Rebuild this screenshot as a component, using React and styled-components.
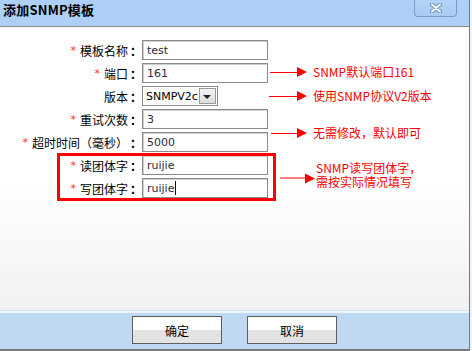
import React from "react";
import styled, { createGlobalStyle } from "styled-components";

const Global = createGlobalStyle`
  html, body { margin: 0; padding: 0; background: #eef3f8; }
  body { font-family: "Noto Sans CJK SC", "Noto Sans", sans-serif; }
`;

const Dialog = styled.div`
  width: 469px;
  height: 349px;
  border-right: 1px solid #7a7a7a;
  border-bottom: 2px solid #7a7a7a;
  display: flex;
  flex-direction: column;
  background: #fff;
`;

const TitleBar = styled.div`
  height: 26px;
  flex: none;
  background: #aecff6;
  border-bottom: 1px solid #8a8a8a;
  display: flex;
  justify-content: space-between;
  align-items: flex-start;
`;

const Title = styled.div`
  font-size: 13px;
  font-weight: 700;
  color: #000;
  line-height: 20px;
  padding-left: 3px;
  letter-spacing: 0.2px;
`;

const CloseButton = styled.div`
  width: 41px;
  height: 16px;
  margin-right: 12px;
  border: 1px solid #7b9ac3;
  border-top: none;
  border-radius: 0 0 4px 4px;
  background: linear-gradient(#b3d3f8, #a9cbf2);
  display: flex;
  align-items: center;
  justify-content: center;
`;

const Content = styled.div`
  position: relative;
  flex: 1;
  background: linear-gradient(#ffffff 55%, #f1f1f1 100%);
  padding-top: 13px;
`;

const Form = styled.div`
  display: grid;
  grid-template-columns: 142px 126px;
  grid-auto-rows: 20px;
  row-gap: 3px;
`;

const Label = styled.div`
  font-size: 12px;
  color: #000;
  display: flex;
  align-items: center;
  justify-content: flex-end;
  padding-right: 1px;
  white-space: nowrap;
`;

const Star = styled.span`
  color: #ff2a2a;
  margin-right: 4px;
  font-family: "DejaVu Sans", sans-serif;
  font-size: 11px;
`;

const Colon = styled.span`
  display: inline-block;
  width: 11px;
  padding-left: 2px;
  font-weight: 700;
`;

const Input = styled.div`
  box-sizing: border-box;
  height: 20px;
  width: ${(p) => p.$w || 126}px;
  border: 1px solid #8a8a8a;
  box-shadow: inset 1px 1px 0 #d0d0d0;
  background: #fff;
  font-family: "DejaVu Sans", sans-serif;
  font-size: 11px;
  color: #2a2a3a;
  display: flex;
  align-items: center;
  padding-left: 4px;
`;

const Caret = styled.span`
  display: inline-block;
  width: 1px;
  height: 14px;
  background: #000;
  margin-left: 1px;
`;

const Select = styled.div`
  box-sizing: border-box;
  height: 20px;
  width: 76px;
  border: 1px solid #8a8a8a;
  background: #fff;
  display: flex;
  align-items: stretch;
  font-family: "DejaVu Sans", sans-serif;
  font-size: 11px;
  color: #000;
`;

const SelectText = styled.div`
  flex: 1;
  display: flex;
  align-items: center;
  padding-left: 3px;
`;

const SelectArrow = styled.div`
  width: 16px;
  margin: 1px;
  border: 1px solid #9a9a9a;
  background: linear-gradient(#f4f4f4, #dcdcdc);
  display: flex;
  align-items: center;
  justify-content: center;
  &::after {
    content: "";
    border-left: 4px solid transparent;
    border-right: 4px solid transparent;
    border-top: 4px solid #222;
    margin-top: 2px;
  }
`;

const Callout = styled.div`
  position: absolute;
  left: ${(p) => p.$x}px;
  top: ${(p) => p.$y}px;
  display: flex;
  align-items: center;
  transform: translateY(-50%);
`;

const Line = styled.div`
  width: ${(p) => p.$w}px;
  height: 1px;
  background: #ff0000;
`;

const Head = styled.div`
  width: 0;
  height: 0;
  border-top: 5px solid transparent;
  border-bottom: 5px solid transparent;
  border-left: 10px solid #ff0000;
`;

const Note = styled.div`
  color: #ff0000;
  font-size: 12px;
  line-height: 14px;
  margin-left: ${(p) => p.$gap}px;
  margin-top: ${(p) => p.$shift || 0}px;
  white-space: nowrap;
  font-family: "Noto Sans CJK SC", sans-serif;
`;

const RedBox = styled.div`
  position: absolute;
  left: 57px;
  top: 126px;
  width: 213px;
  height: 42px;
  border: 3px solid #ff0000;
`;

const Footer = styled.div`
  height: 39px;
  flex: none;
  background: linear-gradient(#cfe2f6 0 1px, #eef5fd 1px 3px, #bfd9f2 3px);
  display: flex;
  justify-content: center;
  align-items: flex-start;
  gap: 25px;
  padding-top: 6px;
  box-sizing: border-box;
`;

const Button = styled.div`
  box-sizing: border-box;
  width: 90px;
  height: 28px;
  border: 1px solid #5e5e5e;
  background: linear-gradient(#ffffff 0 50%, #e3e3e3 50% 100%);
  font-size: 12px;
  color: #000;
  display: flex;
  align-items: center;
  justify-content: center;
`;

const rows = [
  { label: "模板名称", req: true, value: "test" },
  { label: "端口", req: true, value: "161" },
  { label: "版本", req: false, select: "SNMPV2c" },
  { label: "重试次数", req: true, value: "3" },
  { label: "超时时间（毫秒）", req: true, value: "5000" },
  { label: "读团体字", req: true, value: "ruijie" },
  { label: "写团体字", req: true, value: "ruijie", caret: true },
];

export default function App() {
  return (
    <>
      <Global />
      <Dialog>
        <TitleBar>
          <Title>添加SNMP模板</Title>
          <CloseButton>
            <svg width="12" height="10" viewBox="0 0 12 10">
              <path d="M2 1.5 L10 8.5 M10 1.5 L2 8.5" stroke="#6d8db6" strokeWidth="4" strokeLinecap="round" />
              <path d="M2 1.5 L10 8.5 M10 1.5 L2 8.5" stroke="#ffffff" strokeWidth="2" strokeLinecap="round" />
            </svg>
          </CloseButton>
        </TitleBar>
        <Content>
          <Form>
            {rows.map((r) => (
              <React.Fragment key={r.label}>
                <Label>
                  {r.req && <Star>*</Star>}
                  {r.label}
                  <Colon>：</Colon>
                </Label>
                {r.select ? (
                  <Select>
                    <SelectText>{r.select}</SelectText>
                    <SelectArrow />
                  </Select>
                ) : (
                  <Input>
                    {r.value}
                    {r.caret && <Caret />}
                  </Input>
                )}
              </React.Fragment>
            ))}
          </Form>
          <RedBox />
          <Callout $x={270} $y={45}>
            <Line $w={27} />
            <Head />
            <Note $gap={6}>SNMP默认端口161</Note>
          </Callout>
          <Callout $x={269} $y={69}>
            <Line $w={28} />
            <Head />
            <Note $gap={6}>使用SNMP协议V2版本</Note>
          </Callout>
          <Callout $x={271} $y={106}>
            <Line $w={26} />
            <Head />
            <Note $gap={6}>无需修改，默认即可</Note>
          </Callout>
          <Callout $x={280} $y={151}>
            <Line $w={25} />
            <Head />
            <Note $gap={1} $shift={-7}>
              SNMP读写团体字，
              <br />
              需按实际情况填写
            </Note>
          </Callout>
        </Content>
        <Footer>
          <Button>确定</Button>
          <Button>取消</Button>
        </Footer>
      </Dialog>
    </>
  );
}
